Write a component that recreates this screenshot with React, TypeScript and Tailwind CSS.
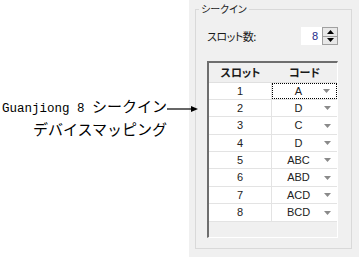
import React from 'react';

const rows = [
  { n: '1', code: 'A', h: 'h-[17px]', focus: true },
  { n: '2', code: 'D', h: 'h-[17px]' },
  { n: '3', code: 'C', h: 'h-[18px]' },
  { n: '4', code: 'D', h: 'h-[17px]' },
  { n: '5', code: 'ABC', h: 'h-[17px]' },
  { n: '6', code: 'ABD', h: 'h-[18px]' },
  { n: '7', code: 'ACD', h: 'h-[17px]' },
  { n: '8', code: 'BCD', h: 'h-[18px]' },
];

const jp = "font-['Noto_Sans_CJK_JP',sans-serif]";

export default function App() {
  return (
    <div className="relative flex w-[359px] h-[273px] bg-white overflow-hidden">
      {/* callout label */}
      <div className="w-[189px] pt-[96px] pr-[22px] text-right text-[15px] leading-[20px] text-black font-['Liberation_Mono','Noto_Sans_CJK_JP',monospace]">
        <div>
          <span className="text-[12.5px]">Guanjiong 8 </span>
          <span className={jp}>シークイン</span>
        </div>
        <div className={jp}>デバイスマッピング</div>
      </div>

      {/* arrow */}
      <svg className="absolute left-[167px] top-[105px]" width="32" height="8" viewBox="0 0 32 8">
        <line x1="0" y1="4" x2="26" y2="4" stroke="#000" strokeWidth="1.2" />
        <path d="M24 1 L31 4 L24 7 Z" fill="#000" />
      </svg>

      {/* dialog panel */}
      <div className={`w-[170px] h-[257px] bg-[#f0f0f0] pt-[2px] pl-[6px] pr-[7px] ${jp} text-[11px] text-[#1a1a1a]`}>
        <fieldset className="h-[247px] border border-[#d9d9d9] pl-[11px] pr-[13px]">
          <legend className="-ml-[8px] px-[2px] leading-[14px] text-[10px] whitespace-nowrap [font-feature-settings:'palt']">
            シークイン
          </legend>

          <div className="mt-[11px] flex items-center justify-between h-[18px]">
            <span className="[font-feature-settings:'palt'] tracking-[-0.5px]">スロット数:</span>
            <div className="flex h-[18px]">
              <div className="w-[21px] bg-white flex items-center justify-end pr-[4px] font-['Liberation_Sans',sans-serif] text-[11px] text-[#1a2a8a]">
                8
              </div>
              <div className="w-[16px] border border-[#a0a0a0] bg-[#e8e8e8] flex flex-col">
                <div className="flex-1 flex items-center justify-center border-b border-[#a0a0a0]">
                  <svg width="7" height="4" viewBox="0 0 7 4"><path d="M3.5 0 L7 4 L0 4 Z" fill="#000" /></svg>
                </div>
                <div className="flex-1 flex items-center justify-center">
                  <svg width="7" height="4" viewBox="0 0 7 4"><path d="M0 0 L7 0 L3.5 4 Z" fill="#000" /></svg>
                </div>
              </div>
            </div>
          </div>

          {/* grid */}
          <div className="mt-[16px] h-[177px] flex flex-col border-t-2 border-l-2 border-[#6e6e6e] border-r border-b border-r-white border-b-white bg-[#f0f0f0]">
            <div className="flex h-[20px] border-b border-[#e0e0e0] font-bold text-[11px] [font-feature-settings:'palt']">
              <div className="w-[63px] flex items-center justify-center">スロット</div>
              <div className="flex-1 flex items-center justify-center">コード</div>
            </div>
            {rows.map((r) => (
              <div key={r.n} className={`flex ${r.h} bg-white border-b border-[#e3e3e3] font-['Liberation_Sans',sans-serif] text-[11px]`}>
                <div className="w-[63px] border-r border-[#e3e3e3] flex items-center justify-center text-[#222]">
                  {r.n}
                </div>
                <div
                  className={`flex-1 relative flex items-center justify-center pr-[12px] text-[#222] ${
                    r.focus ? 'border border-dotted border-black' : ''
                  }`}
                >
                  {r.code}
                  <svg className="absolute right-[6px] top-1/2 -translate-y-1/2" width="7" height="4" viewBox="0 0 7 4">
                    <path d="M0 0 L7 0 L3.5 4 Z" fill="#8a8a8a" />
                  </svg>
                </div>
              </div>
            ))}
          </div>
        </fieldset>
      </div>
    </div>
  );
}
